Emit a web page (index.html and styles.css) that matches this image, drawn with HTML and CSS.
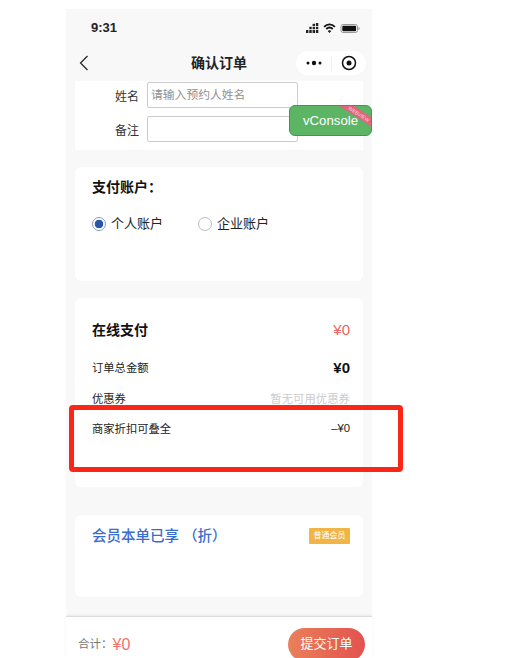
FILE: index.html
```html
<!DOCTYPE html>
<html lang="zh-CN">
<head>
  <meta charset="UTF-8" />
  <title>确认订单</title>
  <link rel="stylesheet" href="styles.css">
</head>
<body>
  <div class="phone">
    <!-- status bar -->
    <div class="statusbar">
      <span class="time">9:31</span>
      <div class="status-icons">
        <svg width="13" height="10" viewBox="0 0 13 10" fill="#222">
          <rect x="0" y="7" width="2.4" height="3"/><rect x="3.3" y="7" width="2.4" height="3"/><rect x="6.600" y="7" width="2.4" height="3"/><rect x="9.900" y="7" width="2.4" height="3"/>
          <rect x="3.3" y="3.800" width="2.4" height="2.400"/><rect x="6.600" y="3.800" width="2.4" height="2.400"/><rect x="9.900" y="3.800" width="2.4" height="2.400"/>
          <rect x="6.600" y="0.800" width="2.4" height="2.200"/><rect x="9.900" y="0" width="2.4" height="3"/>
        </svg>
        <svg width="13" height="10" viewBox="0 0 12 9" fill="none" stroke="#111" stroke-width="1.700">
          <path d="M1 3.400C4 .6 8 .6 11 3.400"/><path d="M3 5.400C4.800 3.800 7.200 3.800 9 5.400"/><path d="M6 9 4.400 7.200C5.400 6.400 6.600 6.400 7.600 7.200Z" fill="#111" stroke="none"/>
        </svg>
        <svg width="21" height="9" viewBox="0 0 20 9">
          <rect x="0.5" y="0.5" width="16.500" height="8" rx="2" fill="none" stroke="#999"/>
          <rect x="1.800" y="1.800" width="13.800" height="5.400" rx="1" fill="#111"/>
          <path d="M18 3v3c.8-.3 1.200-.8 1.200-1.500S18.800 3.300 18 3Z" fill="#999"/>
        </svg>
      </div>
    </div>

    <!-- nav bar -->
    <div class="navbar">
      <svg class="back" width="10" height="16" viewBox="0 0 10 16" fill="none" stroke="#222" stroke-width="1.200">
        <path d="M8.500 1 1.500 8l7 7"/>
      </svg>
      <h1>确认订单</h1>
      <div class="capsule">
        <svg width="16" height="6" viewBox="0 0 16 6" fill="#111">
          <circle cx="2" cy="3" r="1.500"/><circle cx="8" cy="3" r="2.200"/><circle cx="14" cy="3" r="1.500"/>
        </svg>
        <span class="capsule-line"></span>
        <svg width="16" height="16" viewBox="0 0 16 16">
          <circle cx="8" cy="8" r="6.500" fill="none" stroke="#111" stroke-width="1.500"/>
          <circle cx="8" cy="8" r="2.500" fill="#111"/>
        </svg>
      </div>
    </div>

    <div class="main">
      <!-- contact form -->
      <div class="card card-form">
        <div class="field">
          <label>姓名</label>
          <div class="input placeholder">请输入预约人姓名</div>
        </div>
        <div class="field">
          <label>备注</label>
          <div class="input"></div>
        </div>
      </div>

      <!-- account -->
      <div class="card card-account">
        <div class="card-title">支付账户：</div>
        <div class="radios">
          <div class="radio-item"><span class="radio checked"></span>个人账户</div>
          <div class="radio-item"><span class="radio"></span>企业账户</div>
        </div>
      </div>

      <!-- payment -->
      <div class="card card-pay">
        <div class="row row-head">
          <span class="pay-title">在线支付</span>
          <span class="price-red">¥0</span>
        </div>
        <div class="row row-total">
          <span>订单总金额</span>
          <span class="price-black">¥0</span>
        </div>
        <div class="row row-coupon">
          <span>优惠券</span>
          <span class="muted">暂无可用优惠券</span>
        </div>
        <div class="row row-discount">
          <span>商家折扣可叠全</span>
          <span>–¥0</span>
        </div>
      </div>

      <!-- member -->
      <div class="card card-member">
        <span class="member-title">会员本单已享 （折）</span>
        <span class="member-tag">普通会员</span>
      </div>
    </div>

    <!-- bottom bar -->
    <div class="footer">
      <span class="sum-label">合计：</span>
      <span class="sum-price">¥0</span>
      <div class="submit">提交订单</div>
    </div>
  </div>

  <!-- floating things on top of the page -->
  <div class="vconsole">
    vConsole
    <span class="ribbon">WEBVIEW</span>
  </div>
  <div class="highlight"></div>
</body>
</html>
```

FILE: styles.css
```css
* {
  box-sizing: border-box;
}

html, body {
  margin: 0;
  padding: 0;
  height: 658px;
  overflow: hidden;
  background-color: #fff;
}

body {
  font-family: "Liberation Sans", "Noto Sans CJK SC", sans-serif;
  color: #222;
}

.phone {
  width: 306px;
  height: 649px;
  margin: 9px 0 0 66px;
  background-color: #f8f8f8;
  display: flex;
  flex-direction: column;
}

.statusbar {
  height: 33px;
  padding: 10px 11px 0 25px;
  display: flex;
  justify-content: space-between;
  align-items: flex-start;
}

.time {
  font-size: 13px;
  font-weight: bold;
  line-height: 18px;
}

.status-icons {
  display: flex;
  align-items: center;
  gap: 4px;
  margin-top: 4px;
}

.navbar {
  height: 39px;
  padding: 3px 6px 0 13px;
  display: flex;
  align-items: center;
  justify-content: space-between;
  position: relative;
}

.navbar h1 {
  position: absolute;
  left: 0;
  right: 0;
  margin: 0;
  text-align: center;
  font-size: 14px;
  font-weight: bold;
  line-height: 24px;
}

.capsule {
  width: 70px;
  height: 24px;
  border-radius: 12px;
  background-color: #fff;
  display: flex;
  align-items: center;
  justify-content: space-between;
  padding: 0 9px 0 10px;
  position: relative;
}

.capsule-line {
  width: 1px;
  height: 15px;
  background-color: #eee;
}

.main {
  flex: 1;
  padding: 0 9px;
}

.card {
  background-color: #fff;
  border-radius: 6px;
  padding: 0 13px 0 17px;
  margin-bottom: 17px;
}

.card-form {
  height: 69px;
  border-radius: 0;
  padding: 1px 0 0 0;
}

.field {
  display: flex;
  align-items: center;
  height: 26px;
  margin-bottom: 8px;
}

.field label {
  width: 64px;
  text-align: right;
  font-size: 12px;
  color: #333;
}

.input {
  width: 151px;
  height: 26px;
  margin-left: 8px;
  border: 1px solid #ccc;
  border-radius: 2px;
  background-color: #fff;
  padding-left: 3px;
  font-size: 11.800px;
  line-height: 24px;
}

.placeholder {
  color: #909090;
}

.card-account {
  height: 114px;
  padding-top: 10px;
}

.card-title {
  font-size: 14px;
  font-weight: bold;
  line-height: 20px;
  color: #111;
}

.radios {
  display: flex;
  gap: 35px;
  margin-top: 17px;
}

.radio-item {
  display: flex;
  align-items: center;
  font-size: 13px;
  line-height: 20px;
  color: #222;
}

.radio {
  width: 14px;
  height: 14px;
  border: 1px solid #bbb;
  border-radius: 50%;
  margin-right: 5px;
  background-color: #fff;
}

.radio.checked {
  border-color: #7f9bd0;
  background: radial-gradient(circle, #2a56a8 0, #2a56a8 4px, #fff 4.600px);
}

.card-pay {
  height: 189px;
  padding-top: 21px;
  font-size: 11.300px;
  color: #222;
}

.row {
  display: flex;
  justify-content: space-between;
  align-items: center;
}

.row-head {
  height: 20px;
}

.pay-title {
  font-size: 14px;
  font-weight: bold;
  color: #111;
}

.price-red {
  font-size: 15px;
  color: #f0625a;
}

.price-black {
  font-size: 15px;
  font-weight: bold;
  color: #111;
}

.row-total {
  height: 20px;
  margin-top: 18px;
}

.row-coupon {
  height: 20px;
  margin-top: 11px;
}

.muted {
  color: #ccc;
  font-size: 11.400px;
}

.row-discount {
  height: 20px;
  margin-top: 10px;
}

.card-member {
  height: 82px;
  margin-top: 28px;
  padding-top: 11px;
  display: flex;
  justify-content: space-between;
  align-items: flex-start;
}

.member-title {
  font-size: 14.500px;
  line-height: 20px;
  font-weight: 500;
  color: #3c6bd0;
}

.member-tag {
  width: 41px;
  height: 16px;
  margin-top: 2px;
  border-radius: 1px;
  background-color: #f0b545;
  color: #fff;
  font-size: 8px;
  line-height: 16px;
  text-align: center;
}

.footer {
  height: 42px;
  background-color: #fff;
  border-top: 1px solid #ddd;
  box-shadow: 0 -1px 2px rgba(0,0,0,0.06);
  display: flex;
  align-items: flex-start;
  padding: 11px 7px 0 12px;
}

.sum-label {
  font-size: 11.500px;
  line-height: 33px;
  color: #777;
}

.sum-price {
  font-size: 16px;
  line-height: 33px;
  color: #f0726a;
}

.submit {
  margin-left: auto;
  width: 77px;
  height: 33px;
  border-radius: 17px;
  background: linear-gradient(90deg, #ea8059, #e25250);
  color: #fff;
  font-size: 13px;
  line-height: 32px;
  text-align: center;
}

.vconsole {
  position: absolute;
  left: 289px;
  top: 105px;
  width: 83px;
  height: 31px;
  border: 1px solid #3f9a46;
  border-radius: 6px;
  background-color: #5cb465;
  color: #fff;
  font-size: 13.200px;
  line-height: 29px;
  text-align: center;
  overflow: hidden;
}

.ribbon {
  position: absolute;
  right: -18px;
  top: 4px;
  width: 60px;
  height: 8px;
  background-color: #e0667a;
  color: #f6d8dc;
  font-size: 5px;
  line-height: 8px;
  text-align: center;
  transform: rotate(33deg);
}

.highlight {
  position: absolute;
  left: 69px;
  top: 405px;
  width: 334px;
  height: 67px;
  border: 5px solid #fa2618;
  border-radius: 4px;
}
```
